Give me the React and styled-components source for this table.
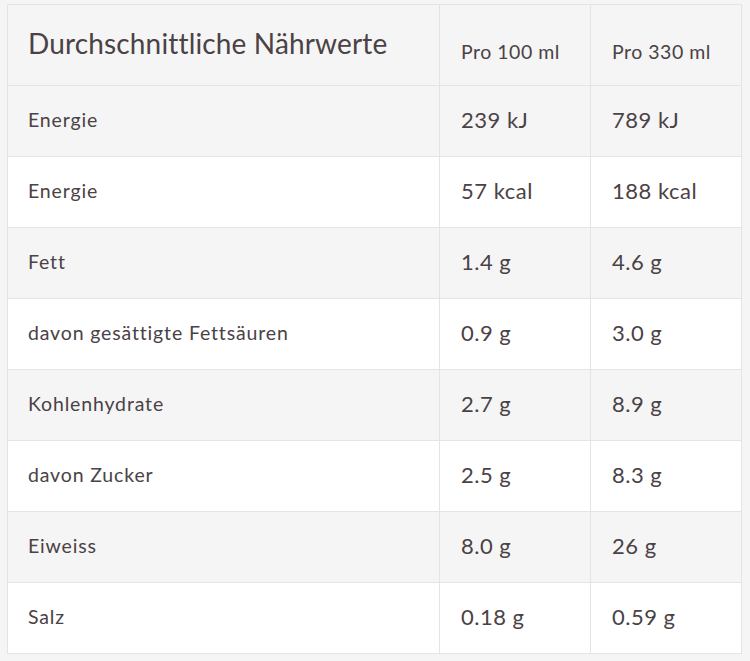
import React from 'react';
import styled, { createGlobalStyle } from 'styled-components';

const GlobalStyle = createGlobalStyle`
  body {
    margin: 0;
    background: #f5f5f5;
    font-family: Lato, "Open Sans", sans-serif;
    color: #4a4245;
  }
`;

const Page = styled.div`
  padding: 4px 9px 8px 7px;
`;

const Table = styled.table`
  width: 734px;
  border-collapse: collapse;
  table-layout: fixed;
  border: 1px solid #e4e4e4;
`;

const HeadCell = styled.th`
  background: #f5f5f5;
  border: 1px solid #e4e4e4;
  height: ${p => (p.$title ? '76px' : '67px')};
  padding: ${p => (p.$title ? '0 20px 4px' : '13px 21px 0')};
  text-align: left;
  font-weight: 400;
  font-size: ${p => (p.$title ? '28px' : '19.5px')};
  letter-spacing: ${p => (p.$title ? '0.15px' : '0.5px')};
  vertical-align: middle;
`;

const Row = styled.tr`
  background: ${p => (p.$shaded ? '#f5f5f5' : '#fff')};
`;

const Cell = styled.td`
  border: 1px solid #e4e4e4;
  height: 67px;
  padding: 0 ${p => (p.$value ? '21px' : '20px')} 3px;
  font-size: ${p => (p.$value ? '22px' : '19.5px')};
  letter-spacing: ${p => (p.$value ? '0.5px' : '0.85px')};
  vertical-align: middle;
`;

const rows = [
  ['Energie', '239 kJ', '789 kJ'],
  ['Energie', '57 kcal', '188 kcal'],
  ['Fett', '1.4 g', '4.6 g'],
  ['davon gesättigte Fettsäuren', '0.9 g', '3.0 g'],
  ['Kohlenhydrate', '2.7 g', '8.9 g'],
  ['davon Zucker', '2.5 g', '8.3 g'],
  ['Eiweiss', '8.0 g', '26 g'],
  ['Salz', '0.18 g', '0.59 g'],
];

export default function App() {
  return (
    <>
      <GlobalStyle />
      <Page>
        <Table>
          <colgroup>
            <col style={{ width: 432 }} />
            <col style={{ width: 151 }} />
            <col style={{ width: 151 }} />
          </colgroup>
          <thead>
            <tr>
              <HeadCell $title>Durchschnittliche Nährwerte</HeadCell>
              <HeadCell>Pro 100 ml</HeadCell>
              <HeadCell>Pro 330 ml</HeadCell>
            </tr>
          </thead>
          <tbody>
            {rows.map((r, i) => (
              <Row key={i} $shaded={i % 2 === 0}>
                <Cell>{r[0]}</Cell>
                <Cell $value>{r[1]}</Cell>
                <Cell $value>{r[2]}</Cell>
              </Row>
            ))}
          </tbody>
        </Table>
      </Page>
    </>
  );
}
